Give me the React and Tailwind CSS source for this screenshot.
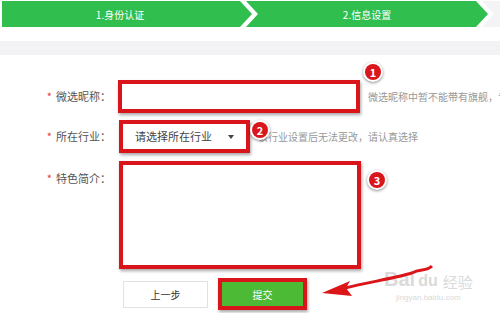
import React from 'react';

const font = { fontFamily: '"Microsoft YaHei", "Noto Sans CJK SC", "Noto Sans", sans-serif' };

function Badge({ n }) {
    return (
        <div className="flex h-[20px] w-[20px] items-center justify-center rounded-full bg-white shadow-[0_1px_3px_rgba(0,0,0,0.45)]">
            <div className="flex h-[16px] w-[16px] items-center justify-center rounded-full bg-[#d8161c] text-[11px] font-bold leading-none text-white">
                {n}
            </div>
        </div>
    );
}

function Label({ children }) {
    return (
        <div className="flex w-[113px] shrink-0 justify-end pr-[2px] text-[11px] text-[#555]">
            <span className="mr-[4px] text-[#e4393c]">*</span>
            {children}
        </div>
    );
}

const redBox = 'shrink-0 border-[4px] border-[#d9141b] bg-white shadow-[1px_2px_3px_rgba(0,0,0,0.35)]';

function App() {
    return (
        <div className="relative h-[313px] w-[500px] overflow-hidden bg-white" style={font}>
            {/* steps */}
            <div className="flex h-[28px] pt-[1px] pl-[2px]">
                <div className="flex h-[26px] w-[250px] shrink-0 items-center justify-center bg-[#30bf4f] pr-[14px] text-[10px] text-white [clip-path:polygon(0_0,238px_0,250px_50%,238px_100%,0_100%)]">
                    1.身份认证
                </div>
                <div className="-ml-[6px] flex h-[26px] w-[242px] shrink-0 items-center justify-center bg-[#30bf4f] text-[10px] text-white [clip-path:polygon(0_0,230px_0,242px_50%,230px_100%,0_100%,12px_50%)]">
                    2.信息设置
                </div>
                <div className="-ml-[6px] h-[26px] flex-1 bg-[#f4f4f6] [clip-path:polygon(0_0,100%_0,100%_100%,0_100%,12px_50%)]" />
            </div>
            <div className="mt-[13px] h-[14px] bg-[#f3f3f6]" />

            {/* form */}
            <div className="flex flex-col pt-[25px]">
                <div className="flex h-[33px] items-center">
                    <Label>微选昵称：</Label>
                    <div className={`ml-[5px] h-[33px] w-[242px] ${redBox}`} />
                    <div className="relative ml-[8px] whitespace-nowrap text-[10px] text-[#999]">
                        微选昵称中暂不能带有旗舰，专
                        <div className="absolute -top-[27px] -left-[5px]"><Badge n="1" /></div>
                    </div>
                </div>

                <div className="mt-[7px] flex h-[33px] items-center">
                    <Label>所在行业：</Label>
                    <div className={`ml-[6px] flex h-[33px] w-[131px] items-center justify-between pl-[12px] pr-[12px] text-[11px] text-[#444] ${redBox}`}>
                        请选择所在行业
                        <span className="h-0 w-0 border-x-[3px] border-t-[4px] border-x-transparent border-t-[#444]" />
                    </div>
                    <div className="relative ml-[8px] whitespace-nowrap text-[10px] text-[#999]">
                        该行业设置后无法更改，请认真选择
                        <div className="absolute -top-[9px] -left-[8px]"><Badge n="2" /></div>
                    </div>
                </div>

                <div className="mt-[8px] flex items-start">
                    <div className="pt-[9px]"><Label>特色简介：</Label></div>
                    <div className={`ml-[6px] h-[108px] w-[242px] ${redBox}`} />
                    <div className="ml-[6px] mt-[9px]"><Badge n="3" /></div>
                </div>

                <div className="mt-[9px] flex items-center">
                    <div className="ml-[123px] flex h-[27px] w-[85px] items-center justify-center border border-[#e2e2e2] bg-white text-[10px] text-[#333]">
                        上一步
                    </div>
                    <div className="ml-[10px] flex h-[32px] w-[89px] items-center justify-center border-[4px] border-[#d9141b] bg-[#4cba35] text-[10px] text-white shadow-[1px_2px_3px_rgba(0,0,0,0.35)]">
                        提交
                    </div>
                </div>
            </div>

            {/* watermark */}
            <div className="absolute left-[384px] top-[269px] flex flex-col items-center text-[#dadada]">
                <div className="flex items-end gap-[3px] leading-none">
                    <span className="text-[20px] font-bold [font-family:'Liberation_Sans',sans-serif]">Bai</span>
                    <span className="text-[16px] font-bold [font-family:'Liberation_Sans',sans-serif]">du</span>
                    <span className="ml-[2px] text-[15px]">经验</span>
                </div>
                <span className="mt-[5px] text-[8px] leading-none [font-family:'Liberation_Sans',sans-serif]">jingyan.baidu.com</span>
            </div>

            {/* arrow */}
            <svg className="absolute left-0 top-0" width="500" height="313" viewBox="0 0 500 313">
                <path d="M432 266 C 426 272, 420 268, 412 273 C 395 278, 370 282, 345 288" stroke="#dc1519" strokeWidth="3" fill="none" />
                <path d="M322 293 L350 281 L346 288 L352 296 Z" fill="#dc1519" />
            </svg>
        </div>
    );
}

export default App;
